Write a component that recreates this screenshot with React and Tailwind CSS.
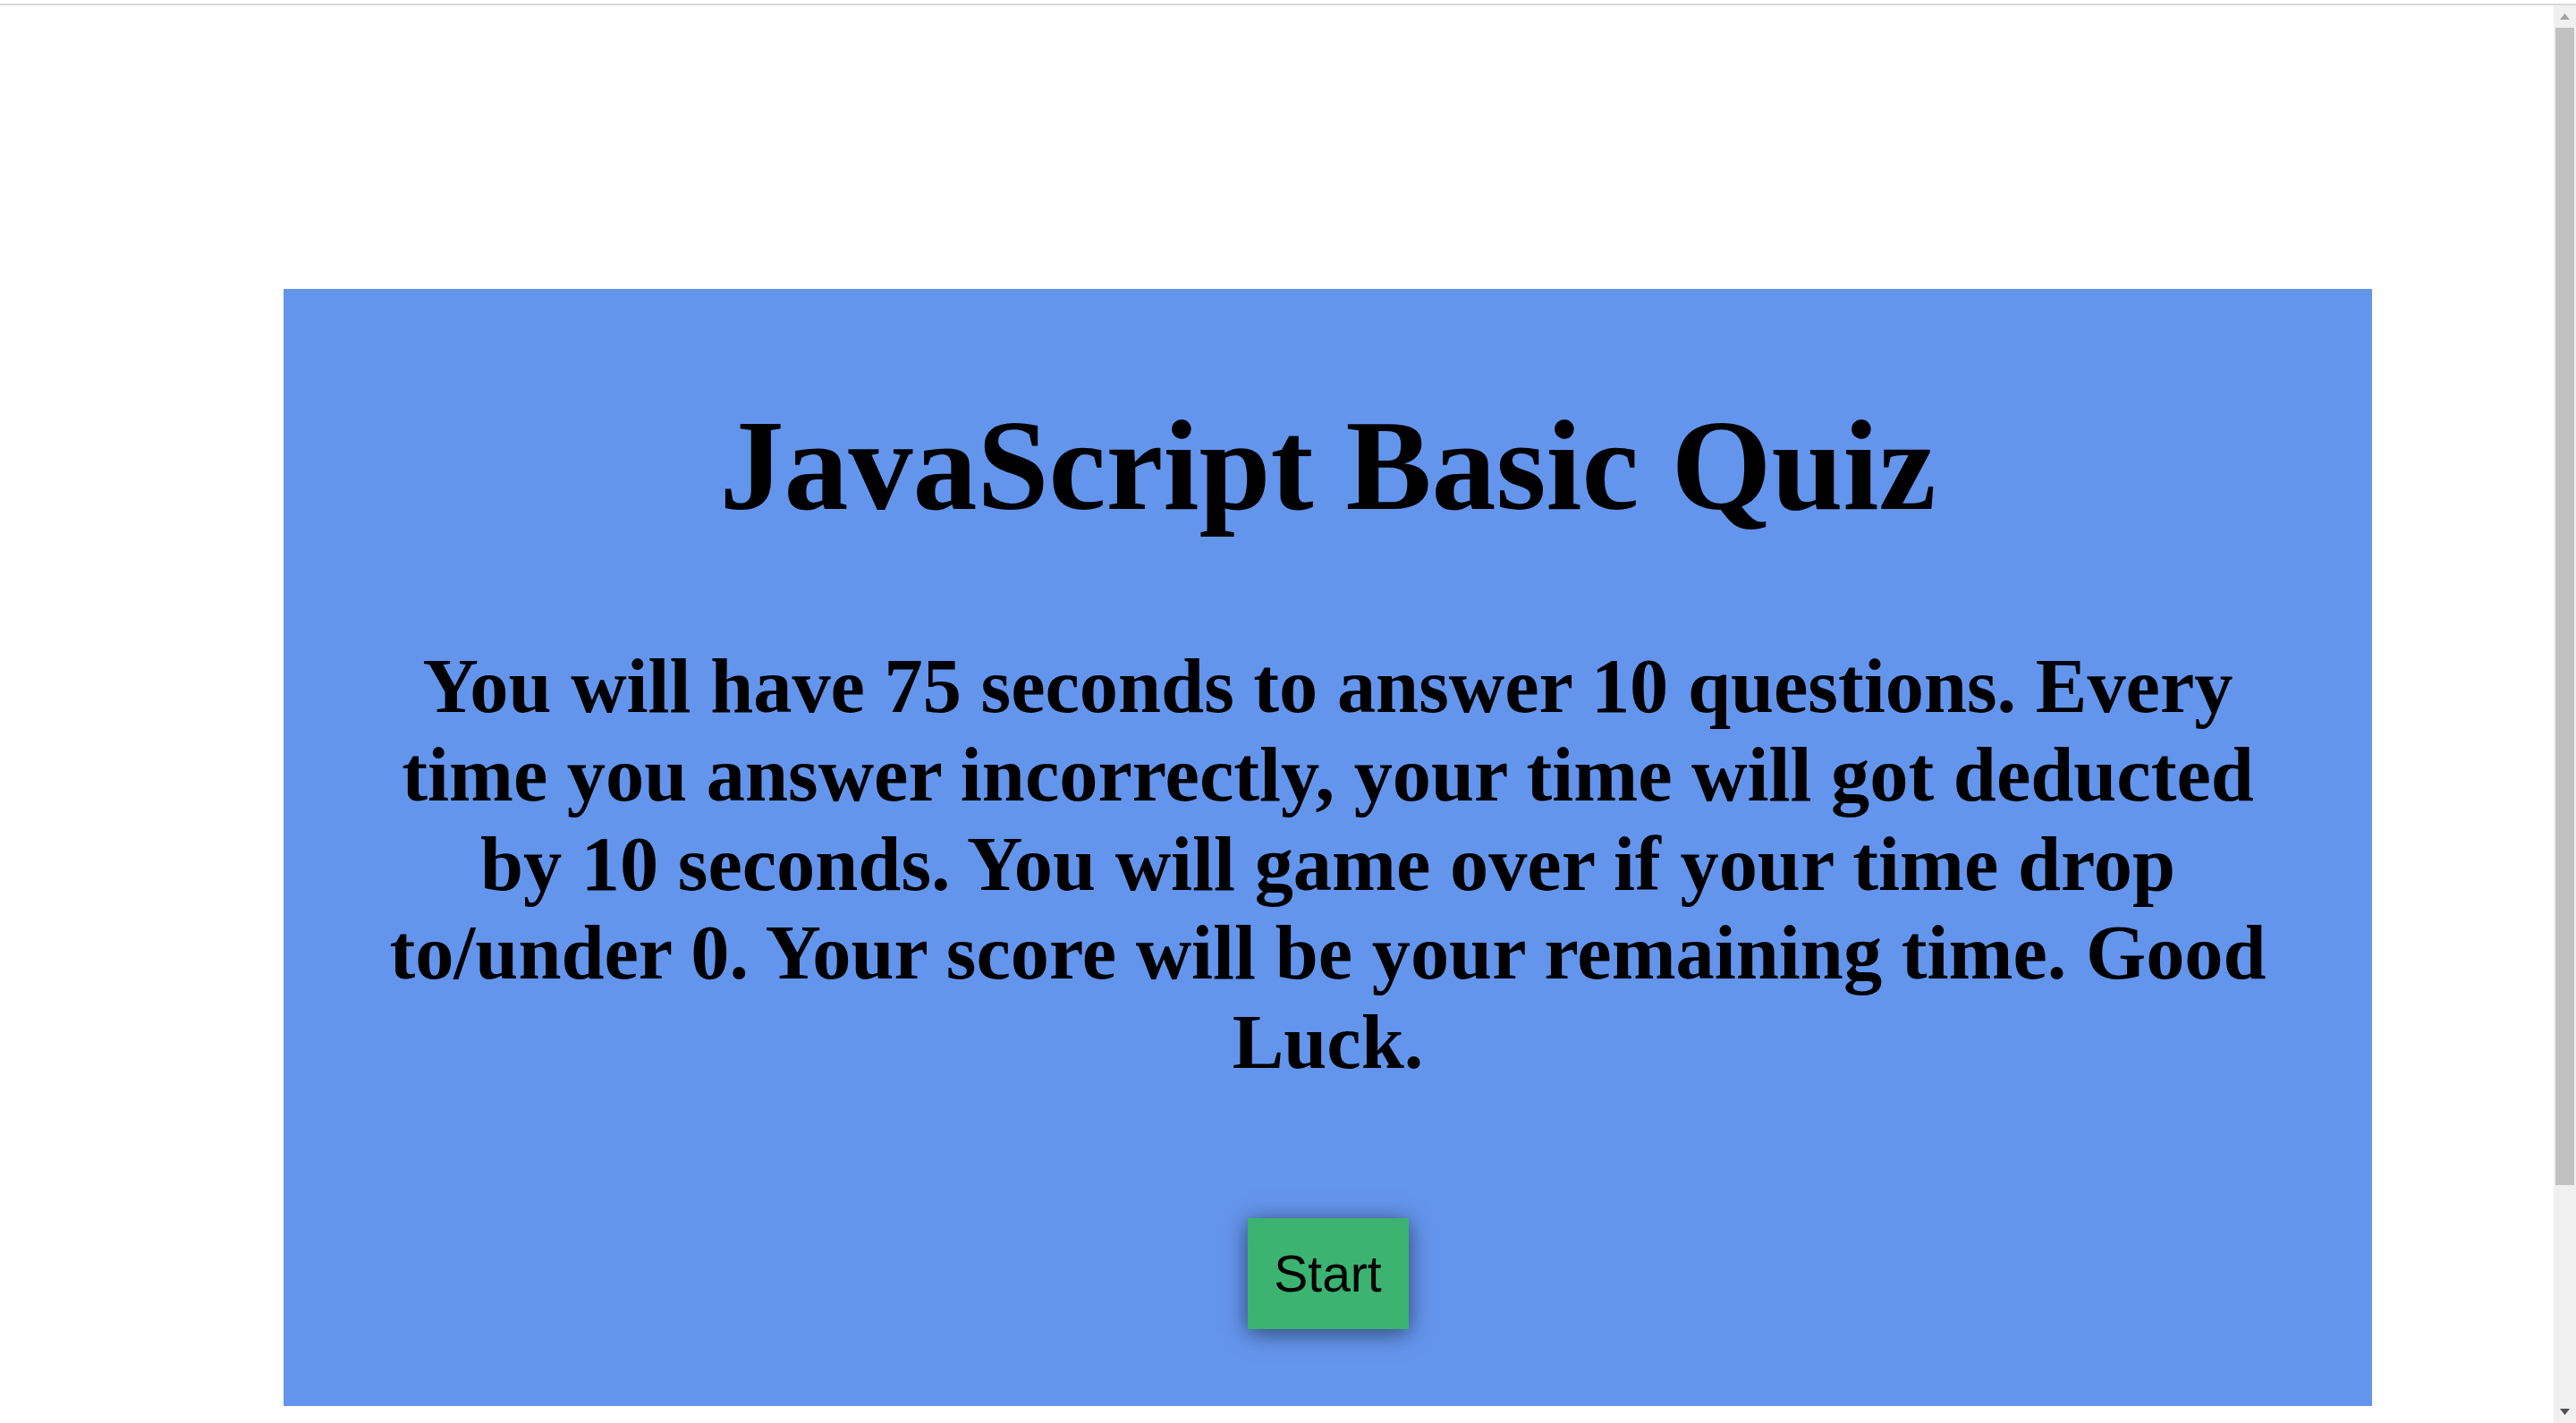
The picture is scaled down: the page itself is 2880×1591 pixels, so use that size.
export default function App() {
  return (
    <div className="flex h-[1591px] w-full flex-col overflow-hidden bg-white">
      <div className="h-[4px] shrink-0 bg-white" />
      <div className="h-[2px] shrink-0 bg-[#dadada]" />
      <div className="flex min-h-0 flex-1 flex-row">
        <main className="flex-1 pl-[317px] pt-[317px]">
          <section className="flex w-[2335px] flex-col items-center bg-[#6495ed] pb-[86px] text-center text-black">
            <h1 className="mt-[115px] font-['Liberation_Serif','Times_New_Roman',serif] text-[144px] font-bold leading-[166px]">
              JavaScript Basic Quiz
            </h1>
            <p className="mt-[114px] px-[100px] font-['Liberation_Serif','Times_New_Roman',serif] text-[86.4px] font-bold leading-[99.4px]">
              You will have 75 seconds to answer 10 questions. Every time you answer incorrectly, your time will got deducted by 10 seconds. You will game over if your time drop to/under 0. Your score will be your remaining time. Good Luck.
            </p>
            <button className="mt-[147px] flex h-[124px] w-[180px] items-center justify-center bg-[#3cb371] font-['Liberation_Sans',Arial,sans-serif] text-[57px] leading-none text-black shadow-[0_4px_24px_rgba(0,0,0,0.55)]">
              Start
            </button>
          </section>
        </main>
        <aside className="flex w-[25px] shrink-0 flex-col bg-[#f0f0f0]">
          <div className="flex h-[25px] shrink-0 items-center justify-center">
            <svg width="11" height="7" viewBox="0 0 11 7">
              <polygon points="5.5,0 11,7 0,7" fill="#a3a3a3" />
            </svg>
          </div>
          <div className="mx-[2px] h-[1294px] shrink-0 bg-[#c1c1c1]" />
          <div className="flex-1" />
          <div className="flex h-[25px] shrink-0 items-center justify-center">
            <svg width="11" height="7" viewBox="0 0 11 7">
              <polygon points="0,0 11,0 5.5,7" fill="#505050" />
            </svg>
          </div>
        </aside>
      </div>
    </div>
  );
}
